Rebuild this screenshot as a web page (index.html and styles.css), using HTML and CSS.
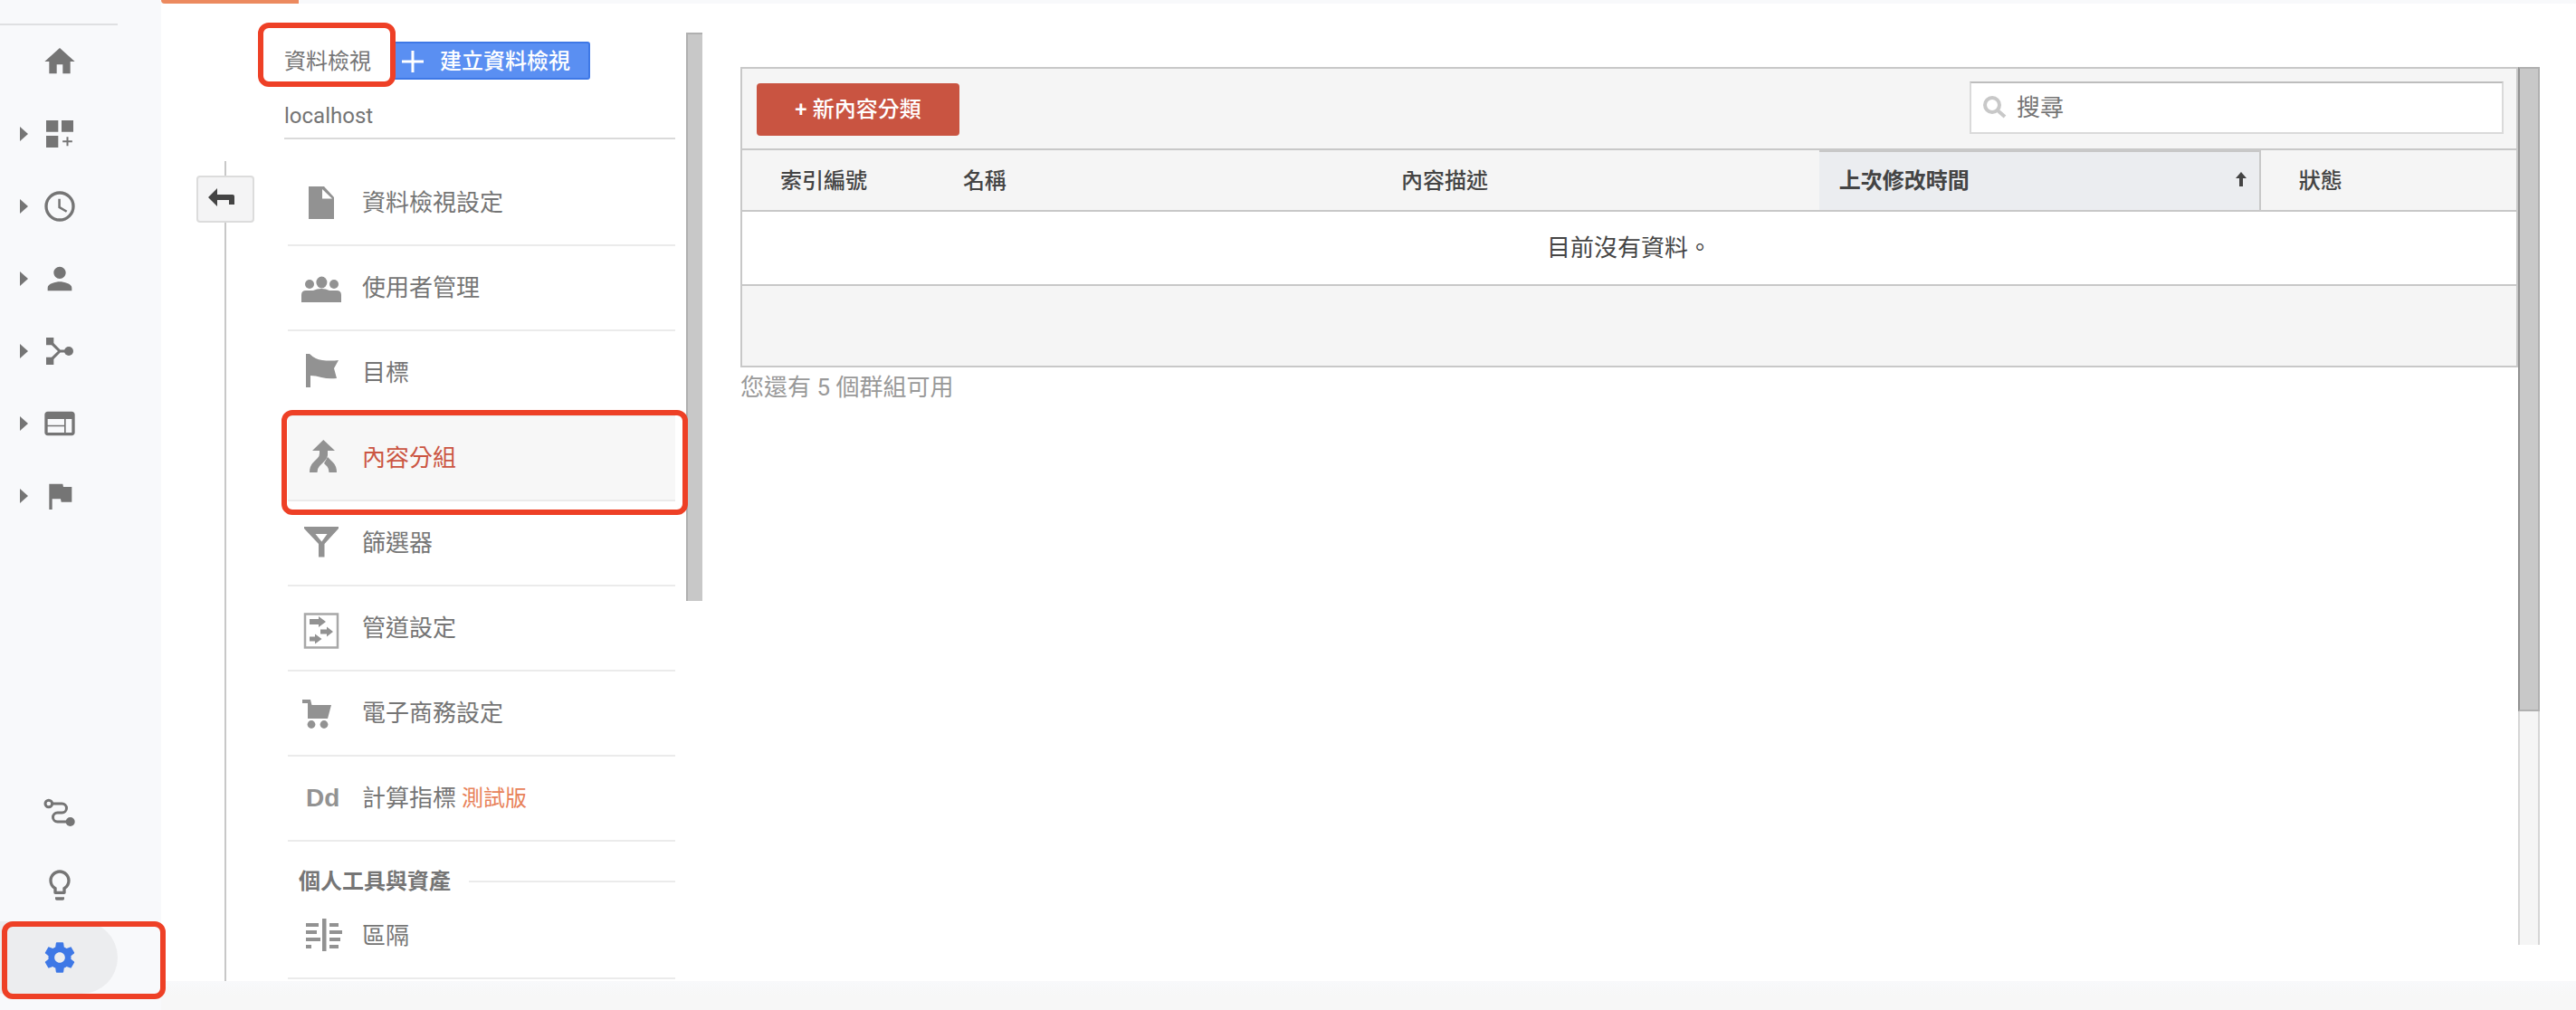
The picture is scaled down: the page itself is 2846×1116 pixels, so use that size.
FILE: index.html
```
<!DOCTYPE html>
<html lang="zh-Hant">
<head>
    <meta charset="UTF-8">
    <meta name="viewport" content="width=device-width, initial-scale=1.0">
    <title>內容分組</title>
    <link rel="stylesheet" href="styles.css">
</head>
<body>

    <!-- Sidebar -->
    <nav class="sidebar">
        <a class="nav-item" href="#" aria-label="首頁">
            <svg class="nav-icon" viewBox="0 0 24 24"><path d="M10 20v-6h4v6h5v-8h3L12 3 2 12h3v8z"/></svg>
        </a>
        <a class="nav-item has-children" href="#" aria-label="自訂">
            <svg class="nav-icon" viewBox="0 0 24 24"><path d="M3 3h8v7.6H3zM13.2 3H21v7.6h-7.8zM3 13.2h8V21H3zM16.5 14h1.2v2.4h2.6v1.2h-2.6V20h-1.2v-2.4h-2.6v-1.2h2.6z"/></svg>
        </a>
        <a class="nav-item has-children" href="#" aria-label="即時">
            <svg class="nav-icon" viewBox="0 0 24 24"><path d="M12 2a10 10 0 1 0 0 20 10 10 0 0 0 0-20zm0 18a8 8 0 1 1 0-16 8 8 0 0 1 0 16zM12.5 7H11v6l5.2 3.1.8-1.2-4.5-2.7z"/></svg>
        </a>
        <a class="nav-item has-children" href="#" aria-label="目標對象">
            <svg class="nav-icon" viewBox="0 0 24 24"><path d="M12 12c2.21 0 4-1.79 4-4s-1.79-4-4-4-4 1.79-4 4 1.79 4 4 4zm0 2c-2.67 0-8 1.34-8 4v2h16v-2c0-2.66-5.33-4-8-4z"/></svg>
        </a>
        <a class="nav-item has-children" href="#" aria-label="客戶開發">
            <svg class="nav-icon" viewBox="0 0 24 24">
                <path d="M3 3h5v5H3zM3 16h5v5H3z"/>
                <circle cx="18" cy="12" r="3"/>
                <path class="line" d="M6.5 6.5L12 12l-5.5 5.5M12 12h5"/>
            </svg>
        </a>
        <a class="nav-item has-children" href="#" aria-label="行為">
            <svg class="nav-icon" viewBox="0 0 24 24"><path d="M20 4H4c-1.1 0-2 .9-2 2v12c0 1.1.9 2 2 2h16c1.1 0 2-.9 2-2V6c0-1.1-.9-2-2-2zm-5 14H4v-4h11v4zm0-5H4V9h11v4zm5 5h-4V9h4v9z"/></svg>
        </a>
        <a class="nav-item has-children" href="#" aria-label="轉換">
            <svg class="nav-icon" viewBox="0 0 24 24"><path d="M14.4 6L14 4H5v17h2v-7h5.6l.4 2h7V6z"/></svg>
        </a>
        <div class="nav-bottom">
            <a class="nav-item" href="#" aria-label="歸因">
                <svg class="nav-icon" viewBox="0 0 24 24">
                    <circle class="line" cx="4.7" cy="6" r="2.3"/>
                    <circle cx="19" cy="18" r="3"/>
                    <path class="line" d="M7 6h6.5a3 3 0 0 1 0 6h-3a3 3 0 0 0 0 6H17"/>
                </svg>
            </a>
            <a class="nav-item" href="#" aria-label="探索">
                <svg class="nav-icon" viewBox="0 0 24 24"><path d="M9 21c0 .55.45 1 1 1h4c.55 0 1-.45 1-1v-1H9v1zm3-19C8.14 2 5 5.14 5 9c0 2.38 1.19 4.47 3 5.74V17c0 .55.45 1 1 1h6c.55 0 1-.45 1-1v-2.26c1.81-1.27 3-3.36 3-5.74 0-3.86-3.14-7-7-7zm2.85 11.1l-.85.6V16h-4v-2.3l-.85-.6A5 5 0 0 1 7 9c0-2.76 2.24-5 5-5s5 2.24 5 5c0 1.63-.8 3.16-2.15 4.1z"/></svg>
            </a>
            <a class="nav-item active" href="#" aria-label="管理">
                <svg class="nav-icon" viewBox="0 0 24 24"><path d="M19.43 12.98c.04-.32.07-.64.07-.98s-.03-.66-.07-.98l2.11-1.65c.19-.15.24-.42.12-.64l-2-3.46c-.12-.22-.39-.3-.61-.22l-2.49 1c-.52-.4-1.08-.73-1.69-.98l-.38-2.65C14.46 2.18 14.25 2 14 2h-4c-.25 0-.46.18-.49.42l-.38 2.65c-.61.25-1.17.59-1.69.98l-2.49-1c-.23-.09-.49 0-.61.22l-2 3.46c-.13.22-.07.49.12.64l2.11 1.65c-.04.32-.07.65-.07.98s.03.66.07.98l-2.11 1.65c-.19.15-.24.42-.12.64l2 3.46c.12.22.39.3.61.22l2.49-1c.52.4 1.08.73 1.69.98l.38 2.65c.03.24.24.42.49.42h4c.25 0 .46-.18.49-.42l.38-2.65c.61-.25 1.17-.59 1.69-.98l2.49 1c.23.09.49 0 .61-.22l2-3.46c.12-.22.07-.49-.12-.64l-2.11-1.65zM12 15.5c-1.93 0-3.5-1.57-3.5-3.5s1.57-3.5 3.5-3.5 3.5 1.57 3.5 3.5-1.57 3.5-3.5 3.5z"/></svg>
                <span class="mark mark-admin"></span>
            </a>
        </div>
    </nav>

    <div class="page">
        <div class="tabs"><span class="tab-active"></span></div>

        <div class="work">
            <div class="rail">
                <button class="back" aria-label="返回">
                    <svg width="30" height="22" viewBox="0 0 30 22"><path d="M0 11L10 1v7h17q2 0 2 2v9h-6v-5H10v7z"/></svg>
                </button>
            </div>

            <!-- View settings -->
            <section class="settings">
                <header class="settings-head">
                    <h2 class="settings-title">資料檢視<span class="mark mark-title"></span></h2>
                    <button class="create">
                        <svg width="24" height="24" viewBox="0 0 24 24"><path d="M10.5 0h3v10.5H24v3H13.5V24h-3V13.5H0v-3h10.5z"/></svg>
                        建立資料檢視
                    </button>
                </header>
                <div class="view-name">localhost</div>

                <ul class="menu">
                    <li><a class="menu-item" href="#">
                        <svg class="menu-icon" viewBox="0 0 44 40"><path d="M8 2h17l11 12v24H8z"/><path class="fold" d="M23 5v10.5h11z"/></svg>
                        資料檢視設定
                    </a></li>
                    <li><a class="menu-item" href="#">
                        <svg class="menu-icon" viewBox="0 0 44 40"><circle cx="9" cy="16" r="5"/><circle cx="36" cy="16" r="5"/><ellipse cx="22.4" cy="14" rx="6" ry="6.5"/><path d="M0 36V28q0-5 5-5h8q4-2 9-2t9 2h8q5 0 5 5v8z"/></svg>
                        使用者管理
                    </a></li>
                    <li><a class="menu-item" href="#">
                        <svg class="menu-icon" viewBox="0 0 44 40"><path d="M5-1h4q6 6 14 7 9 1 18 0l-5 9 3 11q-9 1-17-1-6-2-12-2v13H5z"/></svg>
                        目標
                    </a></li>
                    <li><a class="menu-item selected" href="#">
                        <svg class="menu-icon" viewBox="0 0 44 40"><path d="M24.3 0L37 12h-8v5q0 3-3 6l-6 6q-2.5 2.5-2.5 7H9q0-7 4-11l5-5q2-2 2-5v-3h-8z"/><path d="M29 19l6 6q4 4 4 11h-8.5q0-4-2-6.5L25 26z"/></svg>
                        內容分組
                        <span class="mark mark-menu"></span>
                    </a></li>
                    <li><a class="menu-item" href="#">
                        <svg class="menu-icon" viewBox="0 0 44 40"><path fill-rule="evenodd" d="M3 2h38v2L25.5 21v14.5H19V21L3 4zM15.5 10l6.9 8.5L28.500 10z"/></svg>
                        篩選器
                    </a></li>
                    <li><a class="menu-item" href="#">
                        <svg class="menu-icon" viewBox="0 0 44 40"><path class="frame" d="M4 4.5h36v37H4z"/><path d="M9 10h10V7l8 6-8 6v-3H9zM21 21.5h7v-3l7 5.5-7 5.5v-3h-7zM9 29.5h6v-3l7.5 5.5-7.5 5.5v-3H9z"/></svg>
                        管道設定
                    </a></li>
                    <li><a class="menu-item" href="#">
                        <svg class="menu-icon" viewBox="0 0 44 40"><path d="M1 5h9l1.5 6H33l-4 15H7V9H1z"/><circle cx="11" cy="32.5" r="4.4"/><circle cx="25" cy="32.5" r="4.4"/></svg>
                        電子商務設定
                    </a></li>
                    <li><a class="menu-item" href="#">
                        <span class="menu-icon menu-glyph">Dd</span>
                        計算指標<span class="beta">測試版</span>
                    </a></li>
                </ul>

                <h3 class="group-title">個人工具與資產</h3>
                <ul class="menu">
                    <li><a class="menu-item" href="#">
                        <svg class="menu-icon" viewBox="0 0 44 40"><path d="M23 1h4.5v36H23zM5 6h14v4H5zM5 14h12v4H5zM5 22h16v4H5zM5 30h6v4H5zM31 6h10v4H31zM31 14h14v4H31zM31 22h12v4H31zM31 30h10v4H31z"/></svg>
                        區隔
                    </a></li>
                </ul>
            </section>
            <div class="settings-scroll"></div>

            <!-- Content groupings -->
            <main class="content">
                <div class="panel">
                    <div class="toolbar">
                        <button class="new">+ 新內容分類</button>
                        <label class="search">
                            <svg width="28" height="26" viewBox="0 0 28 26"><circle cx="11" cy="10" r="8"/><path d="M17 16l8 7"/></svg>
                            <input type="text" placeholder="搜尋" aria-label="搜尋">
                        </label>
                    </div>
                    <table class="groups">
                        <thead>
                            <tr>
                                <th class="col-index">索引編號</th>
                                <th class="col-name">名稱</th>
                                <th class="col-desc">內容描述</th>
                                <th class="col-date">
                                    <div class="sort">上次修改時間
                                        <svg width="12" height="16" viewBox="0 0 12 16"><path d="M6 0l6 7H8v9H4V7H0z"/></svg>
                                    </div>
                                </th>
                                <th>狀態</th>
                            </tr>
                        </thead>
                        <tbody>
                            <tr>
                                <td colspan="5">目前沒有資料。</td>
                            </tr>
                        </tbody>
                    </table>
                    <div class="pager"></div>
                </div>
                <p class="note">您還有 5 個群組可用</p>
            </main>
            <div class="content-scroll"><div class="thumb"></div></div>
        </div>

        <footer class="footer"></footer>
    </div>

</body>
</html>
```

FILE: styles.css
```
*,
*::before,
*::after {
    box-sizing: border-box;
}

body {
    margin: 0;
    display: flex;
    height: 100vh;
    overflow: hidden;
    background-color: #f8f9fb;
    font-family: Roboto, "Noto Sans CJK TC", sans-serif;
    font-size: 26px;
    color: #757575;
}

a {
    color: inherit;
    text-decoration: none;
}

button,
input {
    font-family: inherit;
}

/* Sidebar */
.sidebar {
    display: flex;
    flex-direction: column;
    flex-shrink: 0;
    width: 178px;
    padding: 26px 0 18px;
}

.sidebar::before {
    content: "";
    width: 130px;
    height: 2px;
    flex-shrink: 0;
    background-color: #dfe0e2;
}

.nav-item {
    position: relative;
    display: flex;
    align-items: center;
    width: 130px;
    height: 80px;
    padding-left: 22px;
}

.nav-item::before {
    content: "";
    width: 9px;
    margin-right: 15px;
}

.has-children::before {
    border-left: 9px solid #757575;
    border-top: 8px solid transparent;
    border-bottom: 8px solid transparent;
}

.nav-icon {
    width: 40px;
    height: 40px;
    fill: #757575;
}

.nav-icon .line {
    fill: none;
    stroke: #757575;
    stroke-width: 1.8;
}

.nav-bottom {
    margin-top: auto;
}

.nav-item.active {
    background-color: #ecedef;
    border-radius: 0 40px 40px 0;
}

.active .nav-icon {
    fill: #3e78e6;
}

/* Red frames over the highlighted places */
.mark {
    position: absolute;
    border: 6px solid #ee4026;
    border-radius: 12px;
}

.mark-admin {
    inset: 0 -53px -6px 2px;
}

.mark-title {
    inset: -21px -27px -8px -29px;
    z-index: 1;
}

.mark-menu {
    inset: -7px -14px -17px -7px;
}

/* Page */
.page {
    display: flex;
    flex-direction: column;
    flex: 1;
    min-width: 0;
}

.tabs {
    display: flex;
    flex-shrink: 0;
    height: 4px;
}

.tab-active {
    width: 152px;
    border-radius: 0 0 0 4px;
    background-color: #ec8a5f;
}

.work {
    display: flex;
    flex: 1;
    min-height: 0;
    background-color: #fff;
}

.footer {
    height: 32px;
    flex-shrink: 0;
    background: linear-gradient(#f8f9fb, #f7f7f7 50%);
}

.rail {
    display: flex;
    flex-direction: column;
    align-items: center;
    width: 64px;
    margin-left: 39px;
    padding-top: 174px;
}

.rail::before,
.rail::after {
    content: "";
    width: 2px;
    height: 16px;
    background-color: #c8c8c8;
}

.rail::after {
    flex: 1;
}

.back {
    width: 64px;
    height: 52px;
    padding: 0 8px 4px 0;
    border: 2px solid #dcdcdc;
    border-radius: 4px;
    background-color: #f4f4f5;
    fill: #444;
}

.back svg {
    display: block;
    margin: 0 auto;
}

/* View settings */
.settings {
    width: 432px;
    margin-left: 33px;
    padding-top: 42px;
    flex-shrink: 0;
}

.settings-head {
    display: flex;
    height: 42px;
}

.settings-title {
    position: relative;
    margin: 0;
    font-size: 24px;
    font-weight: 400;
    line-height: 44px;
}

.create {
    display: flex;
    align-items: center;
    gap: 18px;
    height: 42px;
    margin-left: 22px;
    padding: 0 20px 4px 10px;
    border: 2px solid #3e78e6;
    border-radius: 3px;
    background-color: #5a8ff2;
    color: #fff;
    fill: #fff;
    font-size: 24px;
    font-weight: 500;
}

.create svg {
    margin-top: 6px;
}

.view-name {
    padding-top: 16px;
    border-bottom: 2px solid #dadada;
    font-size: 24px;
    line-height: 48px;
}

.menu {
    list-style: none;
    margin: 24px 0 0 4px;
    padding: 0;
}

.menu-item {
    position: relative;
    display: flex;
    align-items: center;
    height: 94px;
    padding: 0 0 5px 15px;
    border-bottom: 2px solid #ebebeb;
}

.menu-item.selected {
    background-color: #f7f7f7;
    color: #cb5542;
}

.menu-icon {
    width: 44px;
    height: 40px;
    margin: 5px 23px 0 0;
    overflow: visible;
    fill: #929292;
}

.menu-icon .fold {
    fill: #fff;
}

.menu-icon .frame {
    fill: none;
    stroke: #a8a8a8;
    stroke-width: 2.5;
}

.menu-glyph {
    padding-left: 5px;
    font-family: "Liberation Sans", sans-serif;
    font-size: 28px;
    font-weight: 700;
    line-height: 40px;
    color: #929292;
}

.beta {
    margin-left: 6px;
    font-size: 24px;
    color: #e8825a;
}

.group-title {
    display: flex;
    align-items: center;
    gap: 20px;
    margin: 0;
    padding: 30px 0 0 16px;
    font-size: 24px;
    font-weight: 700;
    line-height: 28px;
}

.group-title::after {
    content: "";
    flex: 1;
    height: 2px;
    background-color: #ebebeb;
}

.group-title + .menu {
    margin-top: 0;
}

.settings-scroll {
    flex-shrink: 0;
    width: 18px;
    height: 628px;
    margin: 32px 0 0 12px;
    border-left: 2px solid #b0b0b0;
    border-top: 2px solid #b0b0b0;
    background-color: #c8c8c8;
}

/* Content groupings */
.content {
    flex: 1;
    min-width: 0;
    margin-left: 42px;
    padding-top: 70px;
}

.panel {
    border: 2px solid #c8c8c8;
    background-color: #f5f5f5;
}

.toolbar {
    display: flex;
    justify-content: space-between;
    height: 90px;
    padding: 14px;
    border-bottom: 2px solid #c8c8c8;
}

.new {
    width: 224px;
    height: 58px;
    margin: 2px;
    padding: 0 0 6px;
    border: none;
    border-radius: 4px;
    background-color: #c95441;
    color: #fff;
    font-size: 24px;
    font-weight: 500;
}

.search {
    display: flex;
    align-items: center;
    gap: 10px;
    width: 590px;
    height: 58px;
    padding-left: 12px;
    border: 2px solid #dadada;
    border-top-color: #bdbdbd;
    background-color: #fff;
}

.search svg {
    fill: none;
    stroke: #c8c8c8;
    stroke-width: 4;
}

.search input {
    flex: 1;
    min-width: 0;
    padding: 0;
    border: none;
    outline: none;
    background: none;
    font-size: 26px;
    color: #757575;
}

.search input::placeholder {
    color: #757575;
}

.groups {
    width: 100%;
    table-layout: fixed;
    border-spacing: 0;
    color: #444;
}

.groups th {
    height: 68px;
    padding: 0 0 3px 42px;
    border-bottom: 2px solid #c8c8c8;
    font-size: 24px;
    font-weight: 500;
    text-align: left;
}

.groups td {
    height: 82px;
    padding: 0 0 5px;
    border-bottom: 2px solid #c8c8c8;
    background-color: #fff;
    text-align: center;
}

.col-index {
    width: 10.3%;
}

.col-name {
    width: 24.7%;
}

.col-desc {
    width: 25.7%;
}

.groups .col-date {
    width: 24.9%;
    padding: 0 14px 5px 22px;
    border-top: 2px solid #c8c8c8;
    border-right: 2px solid #c8c8c8;
    background-color: #ebedf0;
    font-weight: 700;
}

.sort {
    display: flex;
    align-items: center;
    justify-content: space-between;
    fill: #444;
}

.pager {
    height: 88px;
}

.note {
    margin: 0;
    line-height: 44px;
    color: #999;
}

.content-scroll {
    flex-shrink: 0;
    width: 24px;
    margin: 70px 40px 40px 0;
    border: solid #d6d6d6;
    border-width: 0 2px;
    background-color: #f5f5f5;
}

.thumb {
    height: 73.4%;
    margin: 0 -2px;
    border: 2px solid #b0b0b0;
    border-left-color: #929292;
    background-color: #c8c8c8;
}
```
